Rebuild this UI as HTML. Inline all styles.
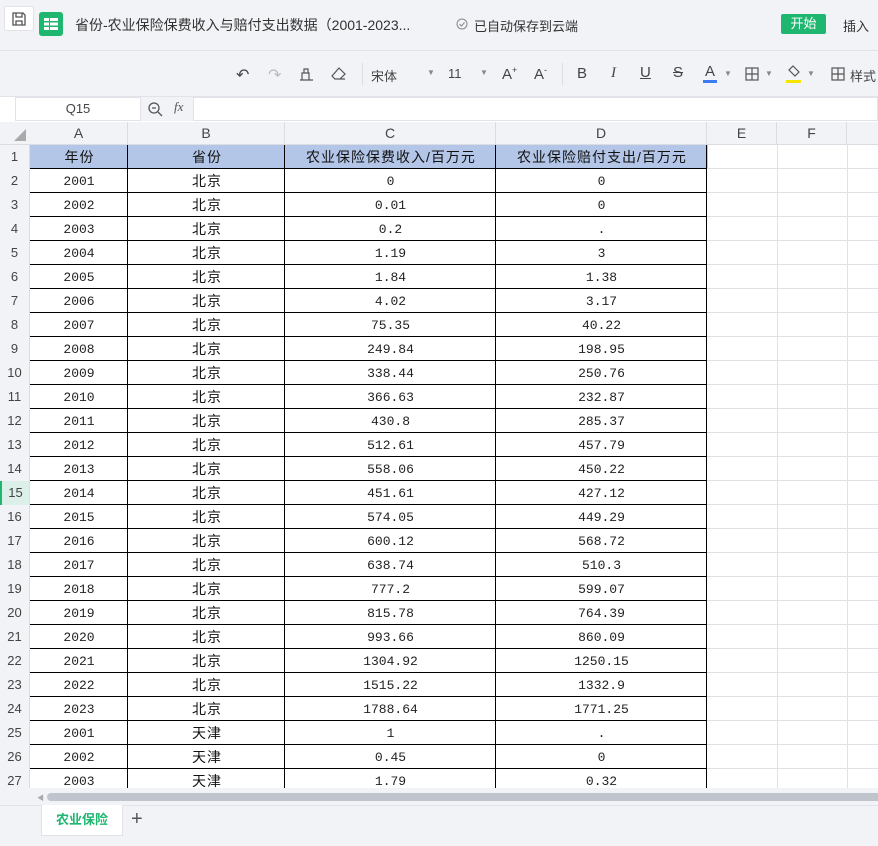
<!DOCTYPE html>
<html><head><meta charset="utf-8"><style>
*{margin:0;padding:0;box-sizing:border-box}
body{width:878px;height:846px;overflow:hidden;background:#f2f3f7;font-family:"Liberation Sans","Noto Sans CJK SC",sans-serif;position:relative;color:#333}
.a{position:absolute}
.tb{font-size:13px;color:#444}
.cell{position:absolute;text-align:center;font-family:"Liberation Mono","Noto Sans CJK SC",monospace;font-size:13px;color:#111;line-height:25px;white-space:nowrap;overflow:hidden}
.rh{position:absolute;left:0;width:30px;text-align:center;font-size:13px;color:#444;line-height:24px;background:#f2f3f7}
.ch{position:absolute;top:122px;height:23px;text-align:center;font-size:14px;color:#444;line-height:23px;background:#f2f3f7;border-right:1px solid #dcdde2}
</style></head><body>
<div class="a" style="left:4px;top:6px;width:30px;height:25px;background:#fff;border:1px solid #e2e3e8;border-radius:2px"></div>
<svg class="a" style="left:11px;top:11px" width="16" height="16" viewBox="0 0 16 16" fill="none" stroke="#555" stroke-width="1.3"><path d="M2 2h10l2 2v10H2z"/><path d="M5 2v4h6V2"/><path d="M5 14v-4h6v4"/></svg>
<div class="a" style="left:39px;top:12px;width:24px;height:24px;background:#1fb670;border-radius:3px"></div>
<svg class="a" style="left:43px;top:16px" width="16" height="16" viewBox="0 0 16 16" fill="#fff"><rect x="1" y="2" width="5" height="3"/><rect x="7" y="2" width="8" height="3"/><rect x="1" y="6.5" width="5" height="3"/><rect x="7" y="6.5" width="8" height="3"/><rect x="1" y="11" width="5" height="3"/><rect x="7" y="11" width="8" height="3"/></svg>
<div class="a" style="left:75px;top:15px;font-size:14px;color:#333">省份-农业保险保费收入与赔付支出数据（2001-2023...</div>
<svg class="a" style="left:456px;top:18px" width="12" height="12" viewBox="0 0 12 12" fill="none" stroke="#888"><circle cx="6" cy="6" r="5"/><path d="M3.5 6l2 2 3-3.5"/></svg>
<div class="a" style="left:474px;top:16px;font-size:13px;color:#333">已自动保存到云端</div>
<div class="a" style="left:781px;top:14px;width:45px;height:20px;background:#1fb670;border-radius:2px;color:#fff;font-size:13px;text-align:center;line-height:20px">开始</div>
<div class="a" style="left:843px;top:16px;font-size:13px;color:#333">插入</div>
<div class="a" style="left:0;top:50px;width:878px;height:1px;background:#e2e3e8"></div>
<div class="a tb" style="left:236px;top:65px;font-size:16px">↶</div>
<div class="a tb" style="left:268px;top:65px;font-size:16px;color:#bbb">↷</div>
<svg class="a" style="left:299px;top:67px" width="15" height="14" viewBox="0 0 15 14" fill="none" stroke="#555" stroke-width="1.2"><path d="M1 13h13M3 13V6h7v7M5 6V2h4v4"/></svg>
<svg class="a" style="left:331px;top:67px" width="16" height="14" viewBox="0 0 16 14" fill="none" stroke="#555" stroke-width="1.2"><path d="M8 1l6 6-5 5H4L1 9z M4 12h10"/></svg>
<div class="a" style="left:362px;top:63px;width:1px;height:22px;background:#ddd"></div>
<div class="a tb" style="left:371px;top:66px">宋体</div>
<div class="a tb" style="left:427px;top:68px;font-size:8px;color:#888">▼</div>
<div class="a tb" style="left:448px;top:66px">11</div>
<div class="a tb" style="left:480px;top:68px;font-size:8px;color:#888">▼</div>
<div class="a tb" style="left:502px;top:65px;font-size:15px">A<sup style="font-size:9px">+</sup></div>
<div class="a tb" style="left:534px;top:65px;font-size:15px">A<sup style="font-size:9px">-</sup></div>
<div class="a" style="left:562px;top:63px;width:1px;height:22px;background:#ddd"></div>
<div class="a tb" style="left:577px;top:65px;font-size:15px">B</div>
<div class="a tb" style="left:611px;top:65px;font-size:15px;font-style:italic;font-family:'Liberation Serif'">I</div>
<div class="a tb" style="left:640px;top:64px;font-size:15px;text-decoration:underline">U</div>
<div class="a tb" style="left:673px;top:64px;font-size:15px;text-decoration:line-through">S</div>
<div class="a tb" style="left:705px;top:63px;font-size:15px">A</div>
<div class="a" style="left:703px;top:80px;width:14px;height:3px;background:#3b7cf5"></div>
<div class="a tb" style="left:724px;top:69px;font-size:8px;color:#888">▼</div>
<svg class="a" style="left:745px;top:67px" width="14" height="14" viewBox="0 0 14 14" fill="none" stroke="#555" stroke-width="1.2"><rect x="1" y="1" width="12" height="12"/><path d="M7 1v12M1 7h12"/></svg>
<div class="a tb" style="left:765px;top:69px;font-size:8px;color:#888">▼</div>
<svg class="a" style="left:787px;top:65px" width="14" height="13" viewBox="0 0 14 13" fill="none" stroke="#555" stroke-width="1.2"><path d="M6 1l6 6-4 4-6-6z"/></svg>
<div class="a" style="left:786px;top:80px;width:15px;height:3px;background:#f5e600"></div>
<div class="a tb" style="left:807px;top:69px;font-size:8px;color:#888">▼</div>
<svg class="a" style="left:831px;top:67px" width="14" height="14" viewBox="0 0 14 14" fill="none" stroke="#555" stroke-width="1.2"><rect x="1" y="1" width="12" height="12"/><path d="M7 1v12M1 7h12"/></svg>
<div class="a tb" style="left:850px;top:66px">样式</div>
<div class="a" style="left:0;top:96px;width:878px;height:26px;background:#fff"></div>
<div class="a" style="left:0;top:96px;width:878px;height:1px;background:#e2e3e8"></div>
<div class="a" style="left:15px;top:97px;width:126px;height:24px;background:#fff;border:1px solid #e2e3e8;text-align:center;font-size:13px;line-height:22px;color:#444">Q15</div>
<div class="a" style="left:141px;top:97px;width:52px;height:24px;background:#f2f3f7"></div>
<div class="a" style="left:193px;top:97px;width:685px;height:24px;border:1px solid #e2e3e8;background:#fff"></div>
<svg class="a" style="left:147px;top:101px" width="16" height="16" viewBox="0 0 16 16" fill="none" stroke="#555" stroke-width="1.3"><circle cx="7" cy="7" r="5"/><path d="M5 7h4M11 11l4 4"/></svg>
<div class="a" style="left:174px;top:99px;font-family:'Liberation Serif';font-style:italic;font-size:13px;color:#555">fx</div>
<div class="a" style="left:30px;top:145px;width:848px;height:643px;background:#fff"></div>
<svg class="a" style="left:0;top:122px" width="878" height="666">
<polygon points="26,7 26,19 14,19" fill="#aaa"/>
<rect x="30" y="23" width="678" height="23" fill="#b4c6e7"/>
<g stroke="#e0e1e5" stroke-width="1">
<path d="M777.5 23V666M847.5 23V666"/>
</g>
</svg>
<div id="g"></div>
<div class="ch" style="left:30px;width:98px">A</div>
<div class="ch" style="left:128px;width:157px">B</div>
<div class="ch" style="left:285px;width:211px">C</div>
<div class="ch" style="left:496px;width:211px">D</div>
<div class="ch" style="left:707px;width:70px">E</div>
<div class="ch" style="left:777px;width:70px">F</div>
<div class="ch" style="left:847px;width:40px"></div>
<div class="a" style="left:0;top:144px;width:878px;height:1px;background:#dcdde2"></div>
<script>
var d=[["年份","省份","农业保险保费收入/百万元","农业保险赔付支出/百万元"],
["2001","北京","0","0"],["2002","北京","0.01","0"],["2003","北京","0.2","."],["2004","北京","1.19","3"],["2005","北京","1.84","1.38"],["2006","北京","4.02","3.17"],["2007","北京","75.35","40.22"],["2008","北京","249.84","198.95"],["2009","北京","338.44","250.76"],["2010","北京","366.63","232.87"],["2011","北京","430.8","285.37"],["2012","北京","512.61","457.79"],["2013","北京","558.06","450.22"],["2014","北京","451.61","427.12"],["2015","北京","574.05","449.29"],["2016","北京","600.12","568.72"],["2017","北京","638.74","510.3"],["2018","北京","777.2","599.07"],["2019","北京","815.78","764.39"],["2020","北京","993.66","860.09"],["2021","北京","1304.92","1250.15"],["2022","北京","1515.22","1332.9"],["2023","北京","1788.64","1771.25"],["2001","天津","1","."],["2002","天津","0.45","0"],["2003","天津","1.79","0.32"]];
var X=[30,128,285,496,707],h="";
for(var i=0;i<27;i++){var t=145+24*i,hh=Math.min(24,788-t);
h+='<div class="rh" style="top:'+t+'px;height:'+hh+'px;'+(i==14?'background:#dcefe8;border-left:2px solid #1fb670;border-right:1px solid #dcdde2':'border-right:1px solid #dcdde2')+'">'+(i+1)+'</div>';
for(var j=0;j<4;j++){var cj=(i==0||j==1);h+='<div class="cell" style="left:'+X[j]+'px;top:'+t+'px;width:'+(X[j+1]-X[j])+'px;height:'+hh+'px;'+(cj?'font-family:Liberation Sans,Noto Sans CJK SC,sans-serif;font-size:14px;letter-spacing:1px;text-indent:1px;':'color:#222;')+'">'+d[i][j]+'</div>';}
h+='<div class="a" style="left:30px;top:'+(t+23)+'px;width:677px;height:1px;background:#000"></div>';
h+='<div class="a" style="left:707px;top:'+(t+23)+'px;width:171px;height:1px;background:#e0e1e5"></div>';}
for(var j=1;j<5;j++)h+='<div class="a" style="left:'+(X[j]-1)+'px;top:145px;width:1px;height:643px;background:#000"></div>';
document.getElementById('g').innerHTML=h;
</script>
<div class="a" style="left:0;top:788px;width:878px;height:17px;background:#f2f3f7"></div>
<div class="a" style="left:37px;top:793px;font-size:7px;color:#aaa">◀</div>
<div class="a" style="left:47px;top:793px;width:840px;height:8px;background:#c0c4cc;border-radius:4px"></div>
<div class="a" style="left:0;top:805px;width:878px;height:1px;background:#e2e3e8"></div>
<div class="a" style="left:41px;top:805px;width:82px;height:31px;background:#fff;border:1px solid #e2e3e8;border-top:none;text-align:center;line-height:30px;font-size:13px;font-weight:bold;color:#1fb670">农业保险</div>
<div class="a" style="left:131px;top:808px;font-size:20px;color:#555">+</div>
</body></html>
